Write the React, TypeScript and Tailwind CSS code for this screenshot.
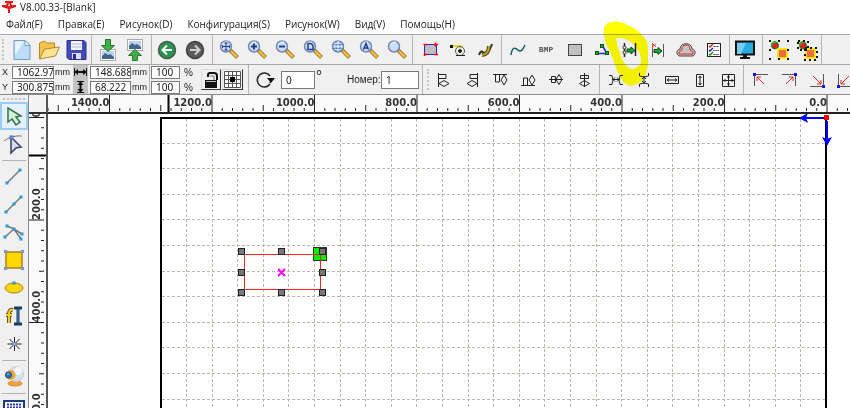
import React from 'react';

type Tool = { label: string; icon: React.ReactNode };

const menuItems = ['Файл(F)', 'Правка(E)', 'Рисунок(D)', 'Конфигурация(S)', 'Рисунок(W)', 'Вид(V)', 'Помощь(H)'];

const Icon = ({ children }: { children: React.ReactNode }) => (
  <svg className="w-6 h-6 shrink-0" viewBox="0 0 24 24" fill="none" stroke="#222" strokeWidth={1}>
    {children}
  </svg>
);

const ToolButton = ({ tool, className = 'w-7' }: { tool: Tool; className?: string }) => (
  <button aria-label={tool.label} className={`h-7 shrink-0 flex items-center justify-center ${className}`}>
    {tool.icon}
  </button>
);

const Zoom = ({ children }: { children?: React.ReactNode }) => (
  <Icon>
    <path d="M13 12l7.500 7.500" stroke="#a87820" strokeWidth={4} />
    <path d="M14 13l6 6" stroke="#f2c452" strokeWidth={2} />
    <circle cx="9" cy="8.500" r="5.500" fill="#c9dff8" stroke="#7487bd" strokeWidth={1.500} />
    <path d="M5 7q2-4 6-3" stroke="#f3f9ff" strokeWidth={1} />
    <g stroke="#253f85" strokeWidth={1.500}>{children}</g>
  </Icon>
);

const Photo = ({ y }: { y: number }) => (
  <g>
    <rect x="4.500" y={y + 0.5} width="15" height="11" fill="#fff" stroke="#aaa" />
    <rect x="6" y={y + 2} width="12" height="8" fill="#b9d3ee" stroke="none" />
    <path d={`M6 ${y + 10}v-3l3-3 3 2 2-1 4 3v2z`} fill="#43658d" stroke="none" />
  </g>
);

const fileTools: Tool[] = [
  {
    label: 'New',
    icon: (
      <Icon>
        <path d="M4 2.500h11l5 5v14H4z" fill="#bcdcf8" stroke="#6d9ccb" />
        <path d="M5 3.500h9L5 17z" fill="#e8f4fe" stroke="none" />
        <path d="M15 2.500v5h5z" fill="#fff" stroke="#6d9ccb" />
      </Icon>
    ),
  },
  {
    label: 'Open',
    icon: (
      <Icon>
        <path d="M2.500 20V5l5-2 2 2h8v5" fill="#f3c44e" stroke="#b8842a" />
        <path d="M2.500 21l5-10 15-2-4 9z" fill="#fde392" stroke="#b8842a" />
      </Icon>
    ),
  },
  {
    label: 'Save',
    icon: (
      <Icon>
        <path d="M3 2.500h17l2 2v17H5l-2-2z" fill="#4348bb" stroke="#292e8c" />
        <rect x="7" y="3" width="11" height="9" fill="#f4f4fc" stroke="none" />
        <path d="M8 6h9M8 9h9" stroke="#b3b3d4" />
        <rect x="8" y="15" width="9" height="6" fill="#dcdcf3" stroke="none" />
        <rect x="9" y="16" width="3" height="5" fill="#292e8c" stroke="none" />
      </Icon>
    ),
  },
];

const transferTools: Tool[] = [
  {
    label: 'Import',
    icon: (
      <Icon>
        <Photo y={11} />
        <path d="M9.500 1.500h5v6h4L12 13.500 5.500 7.500h4z" fill="#42ae48" stroke="#24792b" />
      </Icon>
    ),
  },
  {
    label: 'Export',
    icon: (
      <Icon>
        <Photo y={1} />
        <path d="M9.500 22.500h5v-5h4L12 11.500 5.500 17.500h4z" fill="#42ae48" stroke="#24792b" />
      </Icon>
    ),
  },
];

const historyTools: Tool[] = [
  {
    label: 'Undo',
    icon: (
      <Icon>
        <circle cx="12" cy="12" r="8.500" fill="#2b9350" stroke="#47584d" strokeWidth={1.500} />
        <path d="M17 12H8M12 7.500L7.500 12l4.500 4.500" stroke="#fff" strokeWidth={2} />
      </Icon>
    ),
  },
  {
    label: 'Redo',
    icon: (
      <Icon>
        <circle cx="12" cy="12" r="8.500" fill="#5b5b5b" stroke="#404040" strokeWidth={1.500} />
        <path d="M7 12h9M12 7.500l4.500 4.500-4.500 4.500" stroke="#d2d2d2" strokeWidth={2} />
      </Icon>
    ),
  },
];

const zoomTools: Tool[] = [
  { label: 'Pan', icon: <Zoom><path d="M5 8.500h8M9 4.500v8M5.500 7v3M12.500 7v3M7.500 5h3M7.500 12h3" strokeWidth={1} /></Zoom> },
  { label: 'Zoom in', icon: <Zoom><path d="M6 8.500h6M9 5.500v6" strokeWidth={2} /></Zoom> },
  { label: 'Zoom out', icon: <Zoom><path d="M6 8.500h6" strokeWidth={2} /></Zoom> },
  { label: 'Zoom page', icon: <Zoom><path d="M7 5.500h3l2 2v4H7z" /></Zoom> },
  { label: 'Zoom selection', icon: <Zoom><path d="M7 3v11M11 3v11M3.500 6.500h11M3.500 10.500h11" stroke="#5777a5" strokeDasharray="2 1" strokeWidth={1} /></Zoom> },
  { label: 'Zoom all', icon: <Zoom><path d="M6.500 11.500L9 5.500l2.500 6M7.500 10h3" /></Zoom> },
  { label: 'Zoom window', icon: <Zoom /> },
];

const pathTools: Tool[] = [
  {
    label: 'Edit frame',
    icon: (
      <Icon>
        <rect x="6.500" y="6.500" width="12" height="10" fill="#c0c0c0" stroke="#2424ea" />
        <path d="M5.500 6.500h4M16 6.500h4M6 16.500h3M16 16.500h4M6.500 15v3M17.500 4.500v4" stroke="red" strokeWidth={1.500} />
      </Icon>
    ),
  },
  {
    label: 'Start point',
    icon: (
      <Icon>
        <path d="M5 8h9l2 2" stroke="#e6d800" strokeWidth={2} />
        <rect x="4" y="7" width="3" height="3" fill="#111" stroke="none" />
        <circle cx="14" cy="13" r="4.500" stroke="#555" />
        <circle cx="14" cy="13" r="1.500" fill="#222" />
        <path d="M10 17.500h9" />
      </Icon>
    ),
  },
  {
    label: 'Lead line',
    icon: (
      <Icon>
        <path d="M5 17q2-6 5-2 4 3 8-9" stroke="#333" strokeWidth={2} />
        <path d="M8 17q7-1 7-9" stroke="#4f470c" strokeWidth={4} />
        <path d="M8 17q7-1 7-9" stroke="#bda628" strokeWidth={2} />
      </Icon>
    ),
  },
];

const processTools: Tool[] = [
  { label: 'Smooth', icon: <Icon><path d="M5 17c1-8 4-8 7-5s5-1 7-5" stroke="#175e61" strokeWidth={1.500} /></Icon> },
  { label: 'Bitmap', icon: <span className="font-['Liberation_Mono'] text-[8px] font-bold text-[#555]">BMP</span> },
  { label: 'Fill', icon: <Icon><rect x="6.500" y="6.500" width="13" height="11" fill="#c0c0c0" stroke="#444" /></Icon> },
  {
    label: 'Node chain',
    icon: (
      <Icon>
        <path d="M7 15.500h10L12 7" stroke="#2020e8" strokeWidth={1.500} />
        <g fill="#00b52a" stroke="#124c1a">
          <rect x="10.500" y="6.500" width="3" height="3" />
          <rect x="5.500" y="13.500" width="3" height="3" />
          <rect x="15.500" y="13.500" width="3" height="3" />
        </g>
      </Icon>
    ),
  },
  {
    label: 'Offset',
    icon: (
      <Icon>
        <path d="M6.500 5v14M17.500 5v13" strokeWidth={1.500} />
        <circle cx="6.500" cy="9.500" r="1.500" fill="#fff" />
        <circle cx="6.500" cy="14.500" r="1.500" fill="#fff" />
        <path d="M9 11h4V9l4 3.500-4 3.500v-2H9z" fill="#08b528" stroke="#163d18" />
      </Icon>
    ),
  },
  {
    label: 'Move to edge',
    icon: (
      <Icon>
        <path d="M6.500 6v13M17.500 6v13" stroke="#555" />
        <path d="M6.500 5v6M6 9l4-3M7 6l3 3" stroke="#e44" />
        <path d="M8 11.500h4v-2l4 3.500-4 3.500v-2H8z" fill="#08b528" stroke="#163d18" />
      </Icon>
    ),
  },
  {
    label: 'Contour',
    icon: (
      <Icon>
        <path d="M6 11c0-7 12-7 12 0 4 1 4 5 1 7H5c-3-2-3-6 1-7z" fill="#c5c5c5" stroke="#454545" />
        <path d="M8 12q0-5 4-5t4 5l3 2v2H5v-2z" fill="#c5c5c5" stroke="#ec2929" />
      </Icon>
    ),
  },
  {
    label: 'Task list',
    icon: (
      <Icon>
        <rect x="5.500" y="5.500" width="13" height="13" fill="#fff" />
        <path d="M11 8.500h6M11 12.500h6M11 16.500h6" stroke="#777" />
        <path d="M7 8l1 1 3-3" stroke="#d22" strokeWidth={1.500} />
        <path d="M7 12l1 1 3-3" stroke="#22c" strokeWidth={1.500} />
        <path d="M7 16l1 1 3-3" stroke="#191" strokeWidth={1.500} />
      </Icon>
    ),
  },
];

const previewTools: Tool[] = [
  {
    label: 'Preview',
    icon: (
      <Icon>
        <rect x="3" y="3.500" width="18" height="13" fill="#28abe0" stroke="#111" strokeWidth={2} />
        <path d="M4 16V5h9L8 16z" fill="#72cdef" stroke="none" />
        <path d="M10 17h4v2h3v2H7v-2h3z" fill="#111" stroke="none" />
      </Icon>
    ),
  },
];

const GroupIcon = ({ split = false }: { split?: boolean }) => (
  <Icon>
    <circle cx="8" cy="7.500" r="3.500" fill="#d5271c" stroke="#237b23" />
    <path d="M4.500 7q1-4 5-3" stroke="#43b543" strokeWidth={2} />
    <rect x="11" y="11" width="9" height="9" fill="#f06b41" stroke="#ffe512" strokeWidth={2} />
    {split ? (
      <path
        d="M3 3h10v9H3zM10 10h12v12H10z"
        stroke="#111" strokeWidth={2} strokeDasharray="2 3"
      />
    ) : (
      <rect x="3" y="3" width="18" height="18" stroke="#111" strokeWidth={2} strokeDasharray="2 7" strokeDashoffset={1} />
    )}
  </Icon>
);

const groupTools: Tool[] = [
  { label: 'Group', icon: <GroupIcon /> },
  { label: 'Ungroup', icon: <GroupIcon split /> },
];

const alignTools: Tool[] = [
  { label: 'Align left', icon: <Icon><path d="M6.500 5v14M7 6.500h7v4H7M7 15.500l5-3 5 3-5 3z" /></Icon> },
  { label: 'Align right', icon: <Icon><path d="M17.500 5v14M17 6.500h-7v4h7M17 15.500l-5-3-5 3 5 3z" /></Icon> },
  { label: 'Align top', icon: <Icon><path d="M5 6.500h14M7.500 7v7h4V7M16 7l3 5-3 5-3-5z" /></Icon> },
  { label: 'Align bottom', icon: <Icon><path d="M5 17.500h14M7.500 17v-7h4v7M16 17l3-5-3-5-3 5z" /></Icon> },
  { label: 'Align middle', icon: <Icon><path d="M5 11.500h14M7.500 8.500h4v6h-4zM15 6.500l3 5-3 5-3-5z" /></Icon> },
  { label: 'Align centre', icon: <Icon><path d="M12.500 5v14M8.500 7.500h8v3h-8zM12.500 12.500l5 3-5 3-5-3z" /></Icon> },
];

const spacingTools: Tool[] = [
  { label: 'Space horizontally', icon: <Icon><path d="M5 7.500h3l1 4.500-1 4.500H5M19 7.500h-3L15 12l1 4.500h3M8 11.500h8M11 9.500l-2 2 2 2M13 9.500l2 2-2 2" /></Icon> },
  { label: 'Space vertically', icon: <Icon><path d="M7.500 5v3l4.500 1 4.500-1V5M7.500 19v-3l4.500-1 4.500 1v3M12 8v8M10 11l2-2 2 2M10 13l2 2 2-2" /></Icon> },
  { label: 'Same width', icon: <Icon><path d="M5.500 8.500h13v7h-13zM7 12h10M9 10.500L7 12l2 1.500M15 10.500l2 1.500-2 1.500" /></Icon> },
  { label: 'Same height', icon: <Icon><path d="M8.500 6.500h7v12h-7zM12 8v9M10.500 10L12 8l1.500 2M10.500 15l1.500 2 1.500-2" /></Icon> },
  { label: 'Same size', icon: <Icon><path d="M6.500 6.500h12v12h-12zM12.500 7v11M7 12.500h11M9 11v3M16 11v3M11 9h3M11 16h3" /></Icon> },
];

const corner = (lines: string, arrow: string, x: number, y: number) => (
  <Icon>
    <path d={lines} stroke="#555" />
    <path d={arrow} stroke="#e02525" />
    <rect x={x} y={y} width="3" height="3" fill="#1414e0" stroke="none" />
  </Icon>
);

const cornerTools: Tool[] = [
  { label: 'Top left', icon: corner('M5.500 18V6.500H19', 'M8 13V9h4M8 9l7 7', 4, 5) },
  { label: 'Top right', icon: corner('M5 6.500h13.500V18', 'M12 9h4v4M16 9l-7 7', 17, 5) },
  { label: 'Bottom right', icon: corner('M18.500 6v12.500H5', 'M12 16h4v-4M16 16L8 8', 17, 17) },
  { label: 'Bottom left', icon: corner('M5.500 6v12.500H19', 'M8 12v4h4M8 16l8-8', 4, 17) },
];

const Nodes = ({ points }: { points: number[][] }) => (
  <>
    {points.map(([x, y]) => (
      <rect key={`${x}-${y}`} x={x - 1} y={y - 1} width="2" height="2" fill="#4ab4e8" stroke="#2a93cb" />
    ))}
  </>
);

const editTools: Tool[] = [
  {
    label: 'Node edit',
    icon: (
      <Icon>
        <path d="M2 9q8-6 18-5" stroke="#777" />
        <path d="M9 5l10 10-5 1-5 5z" fill="#d9dcee" stroke="#3a3f5c" strokeWidth={1.500} />
        <rect x="8" y="4" width="3" height="3" fill="#7d9eea" stroke="#4c6bc4" />
      </Icon>
    ),
  },
];

const drawTools: Tool[] = [
  { label: 'Line', icon: <Icon><path d="M5 19L18 6" stroke="#777" strokeWidth={1.500} /><Nodes points={[[5, 19], [18, 6]]} /></Icon> },
  { label: 'Polyline', icon: <Icon><path d="M4 20L19 5" stroke="#777" strokeWidth={1.500} /><Nodes points={[[4, 20], [12, 12], [19, 5]]} /></Icon> },
  {
    label: 'Curve',
    icon: (
      <Icon>
        <path d="M3 17L12 9M5 6l7 3 8 5M12 9l7 10" stroke="#777" strokeWidth={1.500} />
        <Nodes points={[[3, 17], [5, 6], [12, 9], [20, 14], [19, 19]]} />
      </Icon>
    ),
  },
  {
    label: 'Rectangle',
    icon: (
      <Icon>
        <rect x="4" y="4" width="16" height="16" fill="#ffd900" stroke="#a97d20" strokeWidth={1.500} />
        <g fill="#9bb7ef" stroke="#6c8fd9">
          <rect x="2.500" y="2.500" width="2" height="2" /><rect x="19.500" y="2.500" width="2" height="2" />
          <rect x="2.500" y="19.500" width="2" height="2" /><rect x="19.500" y="19.500" width="2" height="2" />
        </g>
      </Icon>
    ),
  },
  {
    label: 'Ellipse',
    icon: (
      <Icon>
        <ellipse cx="12" cy="12" rx="9" ry="5" fill="#ffd900" stroke="#a97d20" />
        <Nodes points={[[12, 7]]} />
      </Icon>
    ),
  },
  {
    label: 'Text',
    icon: (
      <Icon>
        <path d="M11 6q-4-1-4 4v9M4 11h6" stroke="#665818" strokeWidth={4} />
        <path d="M11 6q-4-1-4 4v9M4 11h6" stroke="#f6ce29" strokeWidth={2} />
        <path d="M12 4h8M12 20h8M16 4v16" stroke="#173b61" strokeWidth={3} />
        <path d="M16 5v14" stroke="#3f94c8" />
      </Icon>
    ),
  },
  {
    label: 'Point',
    icon: (
      <Icon>
        <path d="M12.500 5v14M5.500 12h14M7.500 7l10 10M17.500 7l-10 10" />
        <circle cx="12.500" cy="12" r="1.500" fill="#bdd5fb" stroke="#5d83d5" />
      </Icon>
    ),
  },
];

const cameraTools: Tool[] = [
  {
    label: 'Camera',
    icon: (
      <Icon>
        <ellipse cx="13" cy="19.500" rx="7" ry="2.500" fill="#f2a33b" stroke="#d48a2c" />
        <circle cx="14" cy="10" r="7.500" fill="#d3e0ea" stroke="#c3d0da" />
        <circle cx="16" cy="7" r="4" fill="#eff5f9" stroke="none" />
        <circle cx="8.500" cy="11" r="5" fill="#f0a138" stroke="none" />
        <circle cx="6.500" cy="11" r="3" fill="#2379b5" stroke="#194a78" />
        <circle cx="6" cy="10" r="1" fill="#7cc3ec" stroke="none" />
      </Icon>
    ),
  },
];

const arrayTools: Tool[] = [
  {
    label: 'Array',
    icon: (
      <Icon>
        <rect x="2" y="3" width="20" height="19" fill="#fff" stroke="#193a7d" strokeWidth={2} />
        <path d="M5 6.500h15M5 9.500h15M5 13.500h15M5 17.500h15" stroke="#2b35c9" strokeWidth={2} strokeDasharray="2 1" />
      </Icon>
    ),
  },
];

const Group = ({ tools, className, button }: { tools: Tool[]; className: string; button?: string }) => (
  <div className={`flex shrink-0 items-center border-r border-[#b4b4b4] ${className}`}>
    {tools.map((tool) => <ToolButton key={tool.label} tool={tool} className={button} />)}
  </div>
);

const Field = ({ label, value, className }: { label: string; value: string; className: string }) => (
  <input
    aria-label={label}
    defaultValue={value}
    className={`bg-white border border-[#7a7a7a] outline-none text-[#222] ${className}`}
  />
);

const small = "h-[13px] pl-1 font-['Noto_Sans'] text-[10px] leading-[11px]";

// One ruler step is 20 mm; every tenth step carries a label.
const STEP = 10.25;
const steps = Array.from({ length: 240 }, (_, i) => i - 120);
const hasLabel = (k: number, last: number) => k % 10 === 0 && k >= 0 && k <= last;

const HorizontalRuler = () => (
  <svg className="w-full h-[17px] block" aria-hidden="true">
    {steps.map((k) => {
      const x = 779 - k * STEP;
      const major = k % 10 === 0;
      return (
        <g key={k}>
          <path d={`M${x} ${major ? 0 : k % 5 === 0 ? 10 : 13}V${major ? 17 : 16}`} stroke="#222" />
          {hasLabel(k, 70) && (
            <text x={x} y="11" textAnchor="end" fill="#333" className="font-['DejaVu_Sans'] text-[10px] font-bold">
              {(k * 20).toFixed(1)}
            </text>
          )}
        </g>
      );
    })}
    <path d="M120.500 0v17" stroke="#000" strokeWidth={2} />
  </svg>
);

const VerticalRuler = () => (
  <svg className="w-[17px] h-full block" aria-hidden="true">
    {steps.map((k) => {
      const y = 3.5 + k * STEP;
      const major = k % 10 === 0;
      return (
        <g key={k}>
          <path d={`M${major ? 0 : k % 5 === 0 ? 10 : 12} ${y}H15`} stroke="#222" />
          {hasLabel(k, 50) && (
            <text transform={`translate(11 ${y}) rotate(-90)`} fill="#333" className="font-['DejaVu_Sans'] text-[10px] font-bold">
              {(k * 20).toFixed(1)}
            </text>
          )}
        </g>
      );
    })}
    <path d="M0 41.500h17" stroke="#000" strokeWidth={2} />
  </svg>
);

const handles = [[193, 137], [233, 137], [274, 137], [193, 158], [274, 158], [193, 178], [233, 178], [274, 178]];

const Drawing = () => (
  <svg className="absolute inset-0 w-full h-full" role="img" aria-label="Work area">
    <g stroke="#b8b8ac" strokeDasharray="3 2">
      {Array.from({ length: 25 }, (_, i) => (
        <path key={`v${i}`} d={`M${Math.round(779 - (i + 1) * 25.6) - 0.5} 5V2000`} />
      ))}
      {Array.from({ length: 60 }, (_, i) => (
        <path key={`h${i}`} d={`M114 ${Math.round(4 + (i + 1) * 25.6) - 0.5}H778`} />
      ))}
    </g>
    <path d="M113 2000V4h665v1996" fill="none" stroke="#000" strokeWidth={2} />
    <path d="M775 4h-20M779 7v20" stroke="#00f" strokeWidth={2} />
    <path d="M751 4l9-5-2 5 2 5zM779 32l-5-9 5 2 5-2z" fill="#00f" />
    <rect x="776" y="1" width="5" height="5" fill="red" />
    <rect x="265.500" y="133.500" width="13" height="13" fill="#00f000" stroke="#333" />
    <rect x="196.500" y="140.500" width="76" height="35" fill="none" stroke="#ff2020" />
    <path d="M230 155l7 7M237 155l-7 7" stroke="#f0f" strokeWidth={2} />
    {handles.map(([x, y]) => (
      <rect key={`${x}-${y}`} x={x - 2.5} y={y - 2.5} width="6" height="6" fill="#777" stroke="#222" />
    ))}
  </svg>
);

const App = () => (
  <div className="relative flex h-screen flex-col overflow-hidden bg-white font-['Open_Sans',sans-serif] text-[10px] text-[#222]">
    <header className="flex h-[14px] shrink-0 items-center">
      <svg className="ml-0.5 w-[14px] h-3" viewBox="0 0 14 12" fill="#e81b1b">
        <path d="M3 0h8v2H9l1 2h4v2l-3 1-3 1v4H6V8L3 7 0 6V4h4l1-2H3z" />
        <path d="M7 2l1 3H6z" fill="#fff" />
      </svg>
      <h1 className="ml-1 leading-[14px]">V8.00.33-[Blank]</h1>
    </header>

    <nav className="flex h-5 shrink-0 items-center gap-[15px] pl-[6px]">
      {menuItems.map((item) => (
        <button key={item} className="leading-4 whitespace-nowrap">{item}</button>
      ))}
    </nav>

    <div className="flex h-[30px] shrink-0 border-t border-[#a8a8a8] bg-[#f0f0f0]">
      <div className="my-1 ml-0.5 mr-1 w-0.5 shrink-0 border-l-2 border-dotted border-[#c4c4c4]" />
      <Group tools={fileTools} button="w-[27px]" className="pr-0.5" />
      <Group tools={transferTools} button="w-[27px]" className="pl-0.5 pr-[3px]" />
      <Group tools={historyTools} className="pl-px pr-[3px]" />
      <Group tools={zoomTools} className="pl-0.5 pr-px" />
      <Group tools={pathTools} className="pl-[3px] pr-px" />
      <Group tools={processTools} className="pl-0.5 pr-px" />
      <Group tools={previewTools} className="pl-px pr-[3px]" />
      <Group tools={groupTools} className="pl-0.5" />
    </div>

    <div className="flex h-[30px] shrink-0 border-t border-[#a8a8a8] bg-[#f0f0f0]">
      <div className="flex shrink-0 items-center border-r border-[#b4b4b4] pl-[2px] pr-0.5 font-['Liberation_Sans'] text-[9px]">
        <div className="grid w-[10px] gap-[2px] leading-[13px]">
          <span>X</span>
          <span>Y</span>
        </div>
        <div className="grid w-[42px] gap-[2px]">
          <Field label="X" value="1062.975" className={`w-full ${small}`} />
          <Field label="Y" value="300.875" className={`w-full ${small}`} />
        </div>
        <div className="grid w-[19px] gap-[2px] pl-px leading-[13px]">
          <span>mm</span>
          <span>mm</span>
        </div>
        <div className="grid w-[15px] gap-px bg-[#c4c4c4]">
          <svg className="w-[15px] h-[14px]" viewBox="0 0 15 14">
            <path d="M1 7l4-3v2h5V4l4 3-4 3V8H5v2z" fill="#111" />
            <path d="M1.500 3v8M13.500 3v8" stroke="#111" />
          </svg>
          <svg className="w-[15px] h-[14px]" viewBox="0 0 15 14">
            <path d="M7.500 1l3 4h-2v4h2l-3 4-3-4h2V5h-2z" fill="#111" />
            <path d="M4 1.500h7M4 12.500h7" stroke="#111" />
          </svg>
        </div>
        <div className="ml-0.5 grid w-[41px] gap-[2px]">
          <Field label="Width" value="148.688" className={`w-full ${small}`} />
          <Field label="Height" value="68.222" className={`w-full ${small}`} />
        </div>
        <div className="grid w-4 gap-[2px] pl-px leading-[13px]">
          <span>mm</span>
          <span>mm</span>
        </div>
      </div>
      <div className="flex shrink-0 items-center border-r border-[#b4b4b4] pl-[1px] pr-[5px]">
        <div className="grid w-[29px] gap-[2px]">
          <Field label="Width percent" value="100" className={`w-full ${small}`} />
          <Field label="Height percent" value="100" className={`w-full ${small}`} />
        </div>
        <div className="ml-1 grid w-[17px] gap-[2px] font-['Liberation_Sans'] leading-[13px]">
          <span>%</span>
          <span>%</span>
        </div>
        <button aria-label="Lock ratio" className="flex h-[21px] w-5 items-center justify-center border border-b-[#333] border-r-[#333] border-[#ddd]">
          <svg className="w-[18px] h-[18px]" viewBox="0 0 18 18" fill="none">
            <path d="M6 6V4q0-2 2-2h4q3 0 3 3v4" stroke="#111" strokeWidth={2} />
            <path d="M8 5h4v4" stroke="#777" />
            <rect x="3" y="9" width="12" height="8" fill="#111" />
            <path d="M4 10.500h10" stroke="#bbb" />
          </svg>
        </button>
        <button aria-label="Anchor position" className="ml-px flex h-[21px] w-[21px] items-center justify-center border border-b-[#333] border-r-[#333] border-[#ddd]">
          <svg className="w-[17px] h-[17px]" viewBox="0 0 17 17">
            <path d="M.5.5h16v16H.5zM.5 4.500h16M.5 8.500h16M.5 12.500h16M4.500.5v16M8.500.5v16M12.500.5v16" fill="#fff" stroke="#555" />
            <rect x="6" y="6" width="5" height="5" fill="#000" />
          </svg>
        </button>
      </div>
      <div className="flex shrink-0 items-center border-r border-[#b4b4b4] pl-[4px] pr-[3px]">
        <Icon>
          <path d="M17 8a7 7 0 1 0 0 8" strokeWidth={1.500} />
          <path d="M14 10h8l-4 5z" fill="#111" stroke="none" />
          <path d="M17 15l1-2" strokeWidth={1.500} />
        </Icon>
        <Field label="Angle" value="0" className="ml-1 h-[18px] w-[34px] pl-1 font-['Noto_Sans'] text-[10px]" />
        <span className="w-8 self-start pl-px pt-[3px] text-sm leading-4">°</span>
        <label htmlFor="order-number" className="w-[34px] font-['Liberation_Sans'] whitespace-nowrap">Номер:</label>
        <input
          id="order-number"
          defaultValue="1"
          className="h-[18px] w-[38px] border border-[#7a7a7a] bg-white pl-1 font-['Noto_Sans'] text-[10px] outline-none"
        />
      </div>
      <div className="my-1 ml-1 mr-px w-0.5 shrink-0 border-l-2 border-dotted border-[#c4c4c4]" />
      <Group tools={alignTools} className="pr-px" />
      <Group tools={spacingTools} className="pl-0.5 pr-px" />
      <Group tools={cornerTools} className="pl-[3px]" />
    </div>

    <main className="flex min-h-0 flex-1 border-t border-[#8c8c8c]">
      <aside className="flex w-[29px] shrink-0 flex-col items-center overflow-hidden border-r border-[#8c8c8c] bg-[#f0f0f0]">
        <div className="mt-[3px] mb-0.5 h-0.5 w-[22px] shrink-0 border-t-2 border-dotted border-[#c4c4c4]" />
        <button aria-label="Select" className="flex h-7 w-full shrink-0 items-center justify-center border-2 border-[#99cdf5] bg-[#e4f0fa]">
          <Icon>
            <path d="M6 4v14l4-3 4 6 4-3-4-5 5-1z" fill="#d3efd7" stroke="#33734a" strokeWidth={1.500} />
          </Icon>
        </button>
        {editTools.map((tool) => <ToolButton key={tool.label} tool={tool} />)}
        <hr className="mt-[2px] mb-px w-6 shrink-0 border-[#b4b4b4]" />
        {drawTools.map((tool) => <ToolButton key={tool.label} tool={tool} />)}
        <hr className="mt-[2px] mb-px w-6 shrink-0 border-[#b4b4b4]" />
        {cameraTools.map((tool) => <ToolButton key={tool.label} tool={tool} />)}
        <hr className="mt-[3px] mb-[2px] w-6 shrink-0 border-[#b4b4b4]" />
        {arrayTools.map((tool) => <ToolButton key={tool.label} tool={tool} />)}
      </aside>

      <div className="grid min-w-0 flex-1 grid-cols-[19px_minmax(0,1fr)] grid-rows-[19px_minmax(0,1fr)]">
        <div className="border-r-2 border-b-2 border-r-[#555] border-b-[#333] bg-[#f4f4f4]" />
        <div className="overflow-hidden border-b-2 border-[#222] bg-[#fafafa]">
          <HorizontalRuler />
        </div>
        <div className="overflow-hidden border-r-2 border-[#555] bg-[#fafafa]">
          <VerticalRuler />
        </div>
        <div className="relative overflow-hidden bg-white">
          <Drawing />
        </div>
      </div>
    </main>

    {/* marker stroke over the offset tool */}
    <svg className="pointer-events-none absolute left-[602px] top-5 w-12 h-[68px] mix-blend-multiply" viewBox="0 0 48 68">
      <path
        fill="#ffff00"
        fillRule="evenodd"
        d="M2 8Q4 2 10 2Q18 0 25 5Q34 8 39 14Q46 20 46 28V46Q44 53 41 61Q36 64 29 66Q23 65 20 60Q15 52 12 42Q9 33 6 28Q1 18 2 8ZM14 18Q15 27 19 36Q22 46 29 49Q35 49 39 43Q40 35 35 29Q30 20 20 18Z"
      />
    </svg>
  </div>
);

export default App;
